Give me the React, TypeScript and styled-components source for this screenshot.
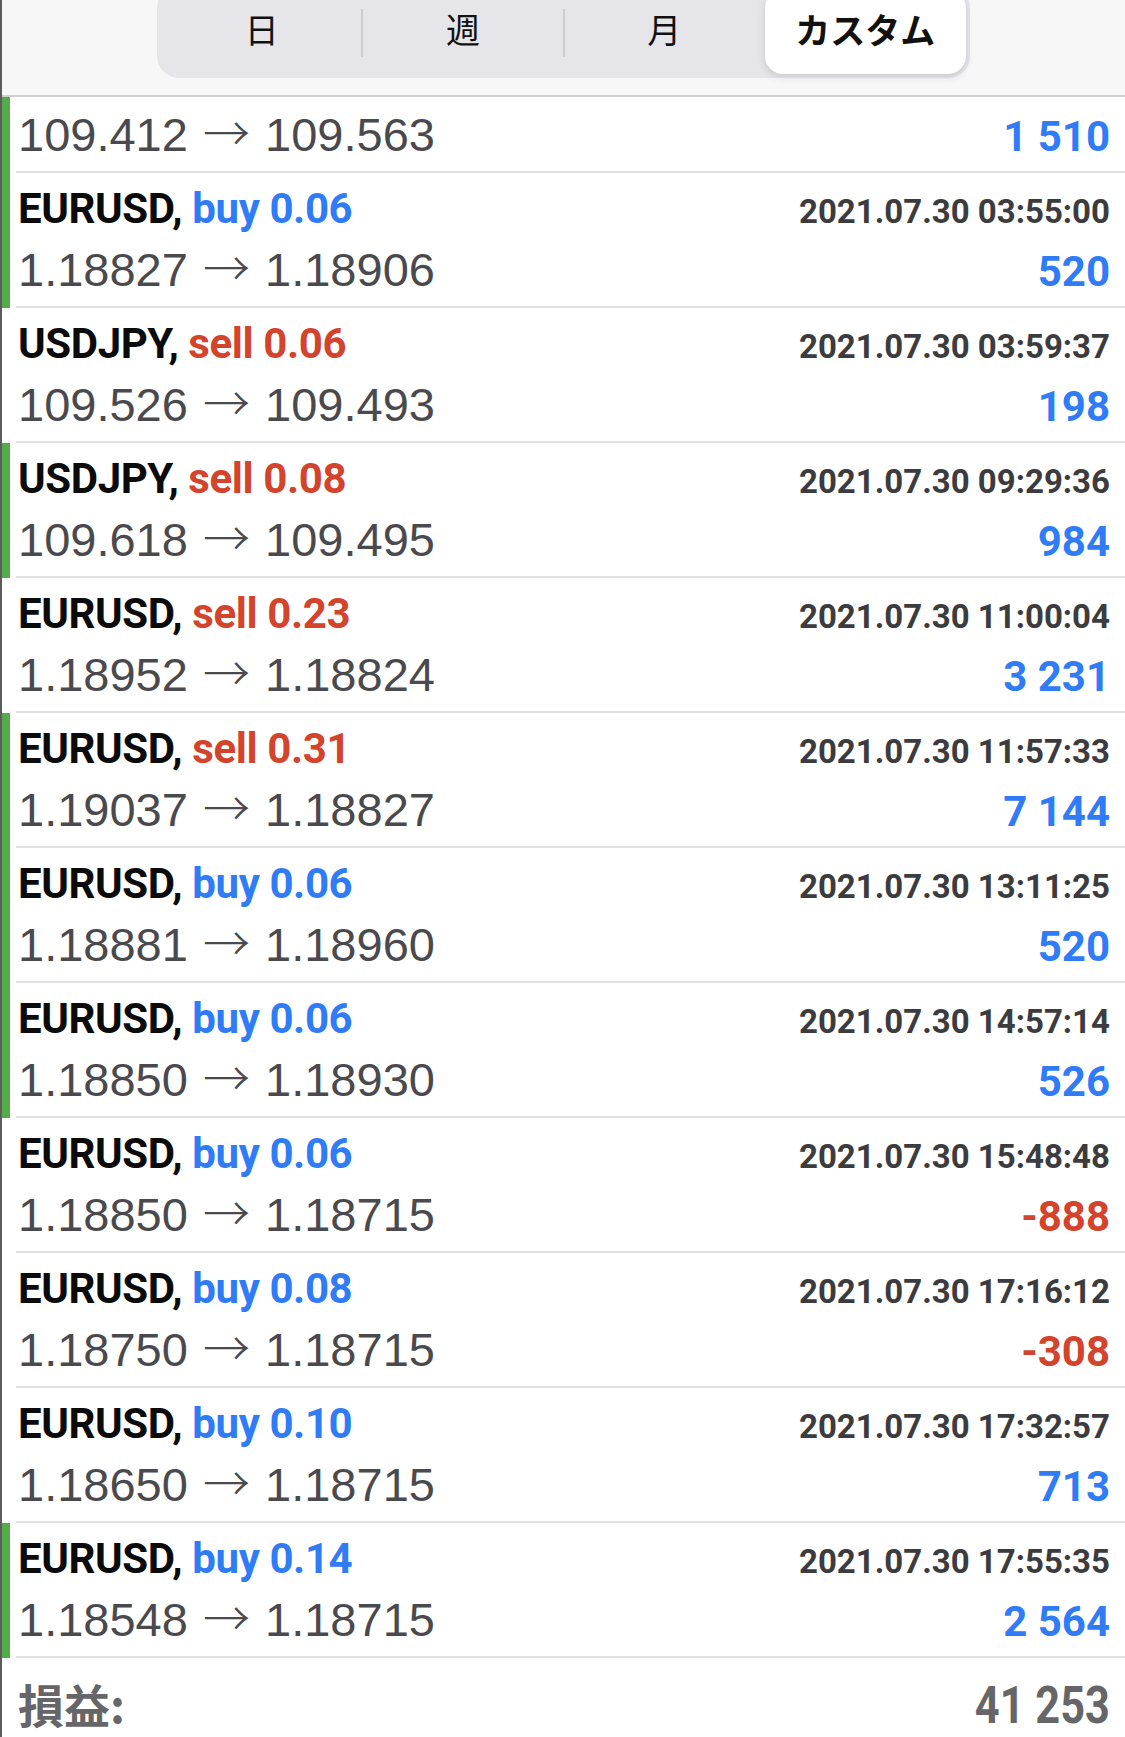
import styled, { createGlobalStyle } from "styled-components";

const GlobalStyle = createGlobalStyle`
  html, body {
    margin: 0;
    padding: 0;
    background: #ffffff;
  }
  body {
    font-family: "Liberation Sans", Arial, sans-serif;
    -webkit-font-smoothing: antialiased;
  }
`;

type Trade = {
  id: number;
  symbol: string;
  side: "buy" | "sell";
  lots: string;
  time: string;
  open: string;
  close: string;
  profit: string;
  marked: boolean;
};

// first trade is scrolled half under the header, only its price line shows
const topTrade = { open: "109.412", close: "109.563", profit: "1 510", marked: true };

const trades: Trade[] = [
  { id: 2, symbol: "EURUSD", side: "buy", lots: "0.06", time: "2021.07.30 03:55:00", open: "1.18827", close: "1.18906", profit: "520", marked: true },
  { id: 3, symbol: "USDJPY", side: "sell", lots: "0.06", time: "2021.07.30 03:59:37", open: "109.526", close: "109.493", profit: "198", marked: false },
  { id: 4, symbol: "USDJPY", side: "sell", lots: "0.08", time: "2021.07.30 09:29:36", open: "109.618", close: "109.495", profit: "984", marked: true },
  { id: 5, symbol: "EURUSD", side: "sell", lots: "0.23", time: "2021.07.30 11:00:04", open: "1.18952", close: "1.18824", profit: "3 231", marked: false },
  { id: 6, symbol: "EURUSD", side: "sell", lots: "0.31", time: "2021.07.30 11:57:33", open: "1.19037", close: "1.18827", profit: "7 144", marked: true },
  { id: 7, symbol: "EURUSD", side: "buy", lots: "0.06", time: "2021.07.30 13:11:25", open: "1.18881", close: "1.18960", profit: "520", marked: true },
  { id: 8, symbol: "EURUSD", side: "buy", lots: "0.06", time: "2021.07.30 14:57:14", open: "1.18850", close: "1.18930", profit: "526", marked: true },
  { id: 9, symbol: "EURUSD", side: "buy", lots: "0.06", time: "2021.07.30 15:48:48", open: "1.18850", close: "1.18715", profit: "-888", marked: false },
  { id: 10, symbol: "EURUSD", side: "buy", lots: "0.08", time: "2021.07.30 17:16:12", open: "1.18750", close: "1.18715", profit: "-308", marked: false },
  { id: 11, symbol: "EURUSD", side: "buy", lots: "0.10", time: "2021.07.30 17:32:57", open: "1.18650", close: "1.18715", profit: "713", marked: false },
  { id: 12, symbol: "EURUSD", side: "buy", lots: "0.14", time: "2021.07.30 17:55:35", open: "1.18548", close: "1.18715", profit: "2 564", marked: true },
];

const BLUE = "#2f7cf6";
const RED = "#d4432c";

const Page = styled.div`
  border-left: 2px solid #5c5c5c;
  min-height: 100vh;
  box-sizing: border-box;
  overflow: hidden;
`;

const Header = styled.div`
  height: 97px;
  box-sizing: border-box;
  display: flex;
  justify-content: center;
  align-items: flex-end;
  padding-bottom: 17px;
  background: #f7f7f7;
  border-bottom: 2px solid #d0d0d2;
  overflow: hidden;
`;

const Segmented = styled.div`
  width: 813px;
  height: 92px;
  flex-shrink: 0;
  box-sizing: border-box;
  padding: 4px;
  display: flex;
  background: #e5e5ea;
  border-radius: 22px;
`;

const Segment = styled.div<{ $active?: boolean; $divider?: boolean }>`
  position: relative;
  flex: 1;
  display: flex;
  align-items: center;
  justify-content: center;
  padding-bottom: 6px;
  box-sizing: border-box;
  border-radius: 18px;
  font-family: "Noto Sans CJK JP", "Noto Sans", sans-serif;
  font-size: ${(p) => (p.$active ? 35 : 34)}px;
  line-height: 40px;
  font-weight: ${(p) => (p.$active ? 700 : 400)};
  color: #111;
  background: ${(p) => (p.$active ? "#ffffff" : "transparent")};
  box-shadow: ${(p) =>
    p.$active ? "0 3px 8px rgba(0, 0, 0, 0.12), 0 0 1px rgba(0, 0, 0, 0.06)" : "none"};

  &::after {
    content: "";
    display: ${(p) => (p.$divider ? "block" : "none")};
    position: absolute;
    right: -1px;
    top: 19px;
    bottom: 17px;
    width: 2px;
    background: #cdcdd1;
  }
`;

const List = styled.div`
  display: flex;
  flex-direction: column;
`;

const Row = styled.div<{ $partial?: boolean }>`
  display: flex;
  height: ${(p) => (p.$partial ? 76 : 135)}px;
`;

const Marker = styled.div<{ $on: boolean }>`
  width: 8px;
  flex-shrink: 0;
  background: ${(p) => (p.$on ? "#52ad48" : "transparent")};
`;

const RowBody = styled.div<{ $partial?: boolean }>`
  flex: 1;
  margin-left: 6px;
  padding: ${(p) => (p.$partial ? 5 : 8)}px 15px 0 2px;
  box-sizing: border-box;
  border-bottom: 2px solid #e1e1e3;
  display: flex;
  flex-direction: column;
`;

const Line = styled.div<{ $h: number }>`
  display: flex;
  justify-content: space-between;
  align-items: baseline;
  height: ${(p) => p.$h}px;
  line-height: ${(p) => p.$h}px;
  white-space: nowrap;
`;

const Title = styled.span`
  font-family: Roboto, "Liberation Sans", sans-serif;
  font-weight: 700;
  font-size: 42px;
  letter-spacing: -0.4px;
  color: #0b0b0b;
`;

const Side = styled.span<{ $sell: boolean }>`
  color: ${(p) => (p.$sell ? RED : BLUE)};
`;

const Time = styled.span`
  font-family: Roboto, "Liberation Sans", sans-serif;
  font-weight: 700;
  font-size: 33px;
  color: #3c3c3f;
`;

const Prices = styled.span`
  font-family: "Liberation Sans", Arial, sans-serif;
  font-size: 47px;
  color: #4a4a4e;
`;

const Arrow = styled.span`
  font-family: "Noto Sans CJK JP", "DejaVu Sans", sans-serif;
  font-weight: 300;
  line-height: 1;
  margin: 0 2px;
`;

const Profit = styled.span<{ $loss: boolean }>`
  font-family: Roboto, "Liberation Sans", sans-serif;
  font-weight: 700;
  font-size: 42px;
  color: ${(p) => (p.$loss ? RED : BLUE)};
`;

const Footer = styled.div`
  display: flex;
  justify-content: space-between;
  align-items: baseline;
  padding: 5px 15px 0 16px;
  line-height: 80px;
  color: #666668;
  white-space: nowrap;
`;

const FooterLabel = styled.span`
  font-family: "Noto Sans CJK JP", "Noto Sans", sans-serif;
  font-weight: 700;
  font-size: 46px;
`;

const FooterValue = styled.span`
  display: inline-block;
  font-family: Roboto, "Liberation Sans", sans-serif;
  font-weight: 700;
  font-size: 51px;
  transform: scaleX(0.85);
  transform-origin: right center;
`;

const tabs = ["日", "週", "月", "カスタム"];
const activeTab = 3;

function PriceLine({ open, close }: { open: string; close: string }) {
  return (
    <Prices>
      {open} <Arrow>→</Arrow> {close}
    </Prices>
  );
}

export default function App() {
  return (
    <Page>
      <GlobalStyle />
      <Header>
        <Segmented>
          {tabs.map((t, i) => (
            <Segment
              key={t}
              $active={i === activeTab}
              $divider={i < tabs.length - 1 && i !== activeTab && i + 1 !== activeTab}
            >
              {t}
            </Segment>
          ))}
        </Segmented>
      </Header>

      <List>
        <Row $partial>
          <Marker $on={topTrade.marked} />
          <RowBody $partial>
            <Line $h={66}>
              <PriceLine open={topTrade.open} close={topTrade.close} />
              <Profit $loss={false}>{topTrade.profit}</Profit>
            </Line>
          </RowBody>
        </Row>
        {trades.map((tr) => (
          <Row key={tr.id}>
            <Marker $on={tr.marked} />
            <RowBody>
              <Line $h={56}>
                <Title>
                  {tr.symbol},{" "}
                  <Side $sell={tr.side === "sell"}>
                    {tr.side} {tr.lots}
                  </Side>
                </Title>
                <Time>{tr.time}</Time>
              </Line>
              <Line $h={66}>
                <PriceLine open={tr.open} close={tr.close} />
                <Profit $loss={tr.profit.startsWith("-")}>{tr.profit}</Profit>
              </Line>
            </RowBody>
          </Row>
        ))}
      </List>

      <Footer>
        <FooterLabel>損益:</FooterLabel>
        <FooterValue>41 253</FooterValue>
      </Footer>
    </Page>
  );
}
